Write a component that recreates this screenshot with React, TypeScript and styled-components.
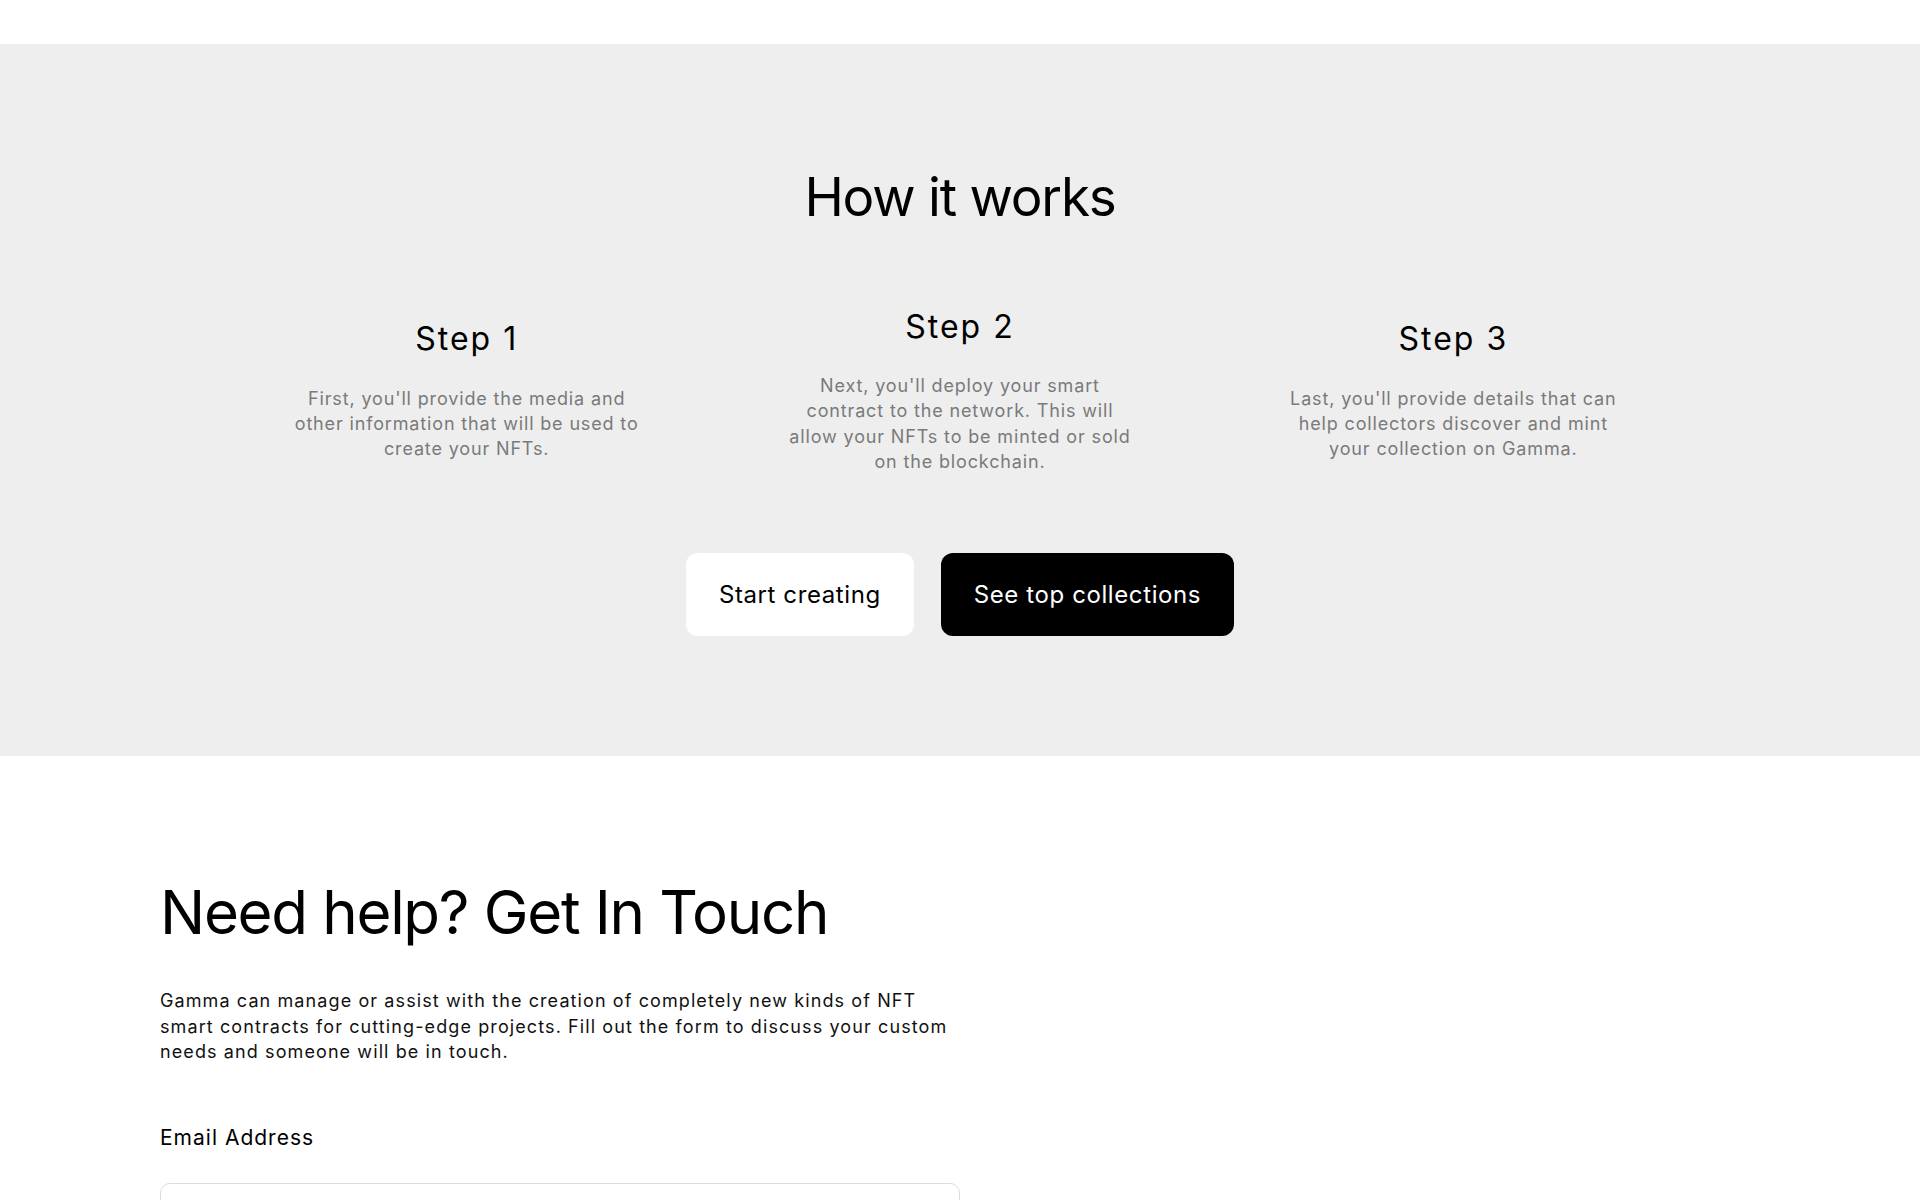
import React from 'react';
import styled, { createGlobalStyle } from 'styled-components';

const GlobalStyle = createGlobalStyle`
  * { box-sizing: border-box; }
  body {
    margin: 0;
    background: #fff;
    color: #000;
    font-family: Inter, "Open Sans", sans-serif;
  }
`;

const TopBar = styled.header`
  height: 44px;
  background: #fff;
`;

const HowSection = styled.section`
  background: #eeeeee;
  padding: 122px 0 120px;
  display: flex;
  flex-direction: column;
  align-items: center;
`;

const SectionTitle = styled.h2`
  margin: 0;
  font-size: 53px;
  font-weight: 400;
  line-height: 1.2;
  letter-spacing: -1.2px;
  text-align: center;
`;

const Steps = styled.div`
  width: 1480px;
  margin-top: 78px;
  display: grid;
  grid-template-columns: repeat(3, 1fr);
  align-items: center;
`;

const Step = styled.div`
  display: flex;
  flex-direction: column;
  align-items: center;
  text-align: center;
`;

const StepTitle = styled.h3`
  margin: 0;
  font-size: 32px;
  font-weight: 400;
  line-height: 1.2;
  letter-spacing: 2px;
`;

const StepText = styled.p`
  margin: 27px 0 0;
  max-width: 350px;
  font-size: 18px;
  line-height: 25.3px;
  letter-spacing: 0.85px;
  color: #7a7a7a;
`;

const Actions = styled.div`
  margin-top: 79px;
  display: flex;
  gap: 27px;
`;

const Button = styled.button<{ $dark?: boolean }>`
  font-family: inherit;
  font-size: 24px;
  line-height: 29px;
  letter-spacing: 0.6px;
  padding: 27px 33px;
  border: none;
  border-radius: 12px;
  cursor: pointer;
  background: ${p => (p.$dark ? '#000' : '#fff')};
  color: ${p => (p.$dark ? '#fff' : '#000')};
`;

const ContactSection = styled.section`
  padding: 120px 160px 80px;
`;

const ContactInner = styled.div`
  max-width: 800px;
`;

const ContactTitle = styled.h2`
  margin: 0;
  font-size: 60px;
  font-weight: 400;
  line-height: 1.2;
  letter-spacing: -1.3px;
`;

const ContactText = styled.p`
  margin: 40px 0 0;
  font-size: 18px;
  line-height: 25.5px;
  letter-spacing: 1.1px;
  color: #111;
`;

const Field = styled.label`
  display: flex;
  flex-direction: column;
  gap: 31px;
  margin-top: 59px;
  font-size: 21px;
  line-height: 28px;
  letter-spacing: 1px;
`;

const Input = styled.input`
  height: 60px;
  width: 100%;
  border: 1px solid #dcdcdc;
  border-radius: 10px;
  padding: 0 20px;
  font-family: inherit;
  font-size: 18px;
  outline: none;
`;

const steps = [
  {
    title: 'Step 1',
    text: "First, you'll provide the media and other information that will be used to create your NFTs.",
  },
  {
    title: 'Step 2',
    text: "Next, you'll deploy your smart contract to the network. This will allow your NFTs to be minted or sold on the blockchain.",
  },
  {
    title: 'Step 3',
    text: "Last, you'll provide details that can help collectors discover and mint your collection on Gamma.",
  },
];

export default function App() {
  return (
    <>
      <GlobalStyle />
      <TopBar />
      <HowSection>
        <SectionTitle>How it works</SectionTitle>
        <Steps>
          {steps.map(s => (
            <Step key={s.title}>
              <StepTitle>{s.title}</StepTitle>
              <StepText>{s.text}</StepText>
            </Step>
          ))}
        </Steps>
        <Actions>
          <Button>Start creating</Button>
          <Button $dark>See top collections</Button>
        </Actions>
      </HowSection>
      <ContactSection>
        <ContactInner>
          <ContactTitle>Need help? Get In Touch</ContactTitle>
          <ContactText>
            Gamma can manage or assist with the creation of completely new kinds of NFT smart
            contracts for cutting-edge projects. Fill out the form to discuss your custom needs and
            someone will be in touch.
          </ContactText>
          <Field>
            Email Address
            <Input type="email" />
          </Field>
        </ContactInner>
      </ContactSection>
    </>
  );
}
